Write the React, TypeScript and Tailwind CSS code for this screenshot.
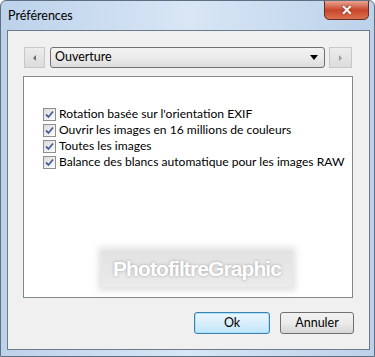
import React from "react";

const font = { fontFamily: 'Lato, "Liberation Sans", sans-serif' };

function Check({ label }: { label: string }) {
  return (
    <div className="flex items-center h-[16px] whitespace-nowrap">
      <div className="w-[13px] h-[13px] shrink-0 border border-[#8e8f8f] bg-gradient-to-br from-[#dcdcdc] to-[#fbfbfb] flex items-center justify-center">
        <svg width="9" height="9" viewBox="0 0 9 9">
          <path d="M1 4.5 L3.5 7 L8 1.5" fill="none" stroke="#4a5f97" strokeWidth="1.8" />
        </svg>
      </div>
      <span className="ml-[3px] text-[12.1px] text-black leading-none">{label}</span>
    </div>
  );
}

export default function App() {
  return (
    <div
      className="w-[375px] h-[357px] flex flex-col bg-gradient-to-r from-[#bcd2ea] via-[#d8e6f5] to-[#bcd2ea] border border-[#5f6f82] rounded-t-[6px] overflow-hidden"
      style={font}
    >
      {/* Title bar */}
      <div className="h-[29px] flex items-start relative">
        <span className="ml-[7px] mt-[6px] text-[12.5px] text-black">Préférences</span>
        <div className="ml-auto mr-[5px] w-[45px] h-[20px] -mt-[1px] rounded-b-[5px] border border-[#6b2b20] bg-gradient-to-b from-[#e8a493] via-[#c8452a] to-[#d8704f] flex items-center justify-center">
          <span className="text-white text-[14px] font-bold leading-none" style={{ textShadow: "0 0 2px #5a1a10" }}>
            ✕
          </span>
        </div>
      </div>
      {/* Client area */}
      <div className="ml-[6px] mr-[4px] h-[320px] border border-[#6c7a8c] bg-[#f0f0f0] flex flex-col">
        <div className="mt-[16px] ml-[16px] flex items-center h-[21px]">
          <div className="w-[21px] h-[21px] border border-[#c8c8c8] bg-gradient-to-b from-[#ececec] to-[#dcdcdc] flex items-center justify-center">
            <svg width="4" height="6" viewBox="0 0 4 6">
              <path d="M3 0 L0 3 L3 6 Z" fill="#6d6d6d" />
            </svg>
          </div>
          <div className="ml-[5px] w-[275px] h-[21px] rounded-[3px] border border-[#707070] bg-gradient-to-b from-[#f3f3f3] via-[#ebebeb] to-[#dddddd] flex items-center">
            <span className="ml-[4px] text-[12.5px] text-black">Ouverture</span>
            <svg className="ml-auto mr-[6px]" width="8" height="5" viewBox="0 0 8 5">
              <path d="M0 0 L8 0 L4 5 Z" fill="#000" />
            </svg>
          </div>
          <div className="ml-[4px] w-[23px] h-[21px] border border-[#c8c8c8] bg-gradient-to-b from-[#ececec] to-[#dcdcdc] flex items-center justify-center">
            <svg width="4" height="6" viewBox="0 0 4 6">
              <path d="M0 0 L3 3 L0 6 Z" fill="#9a9a9a" />
            </svg>
          </div>
        </div>
        <div className="mt-[8px] ml-[15px] w-[330px] h-[222px] border border-[#828790] bg-white flex flex-col">
          <div className="mt-[29px] ml-[19px] flex flex-col">
            <Check label="Rotation basée sur l'orientation EXIF" />
            <Check label="Ouvrir les images en 16 millions de couleurs" />
            <Check label="Toutes les images" />
            <Check label="Balance des blancs automatique pour les images RAW" />
          </div>
          <div className="mt-auto mb-[10px] ml-[78px] w-[190px] h-[36px] bg-gradient-to-b from-[#e2e2e2] to-[#ebebeb] shadow-[0_0_6px_4px_rgba(225,225,225,0.9)] flex items-center justify-center">
            <span
              className="text-white text-[21px] font-bold tracking-[-0.9px]"
              style={{ fontFamily: '"Liberation Sans", Arial, sans-serif', textShadow: "0 0 3px rgba(140,140,140,0.8)" }}
            >
              PhotofiltreGraphic
            </span>
          </div>
        </div>
        <div className="mt-[14px] flex justify-end pr-[15px] gap-[10px]">
          <div className="w-[76px] h-[22px] rounded-[3px] border border-[#3c7fb1] bg-gradient-to-b from-[#eaf6fd] via-[#d9eefa] to-[#bee6fd] shadow-[inset_0_0_0_1px_#a7e3fb] flex items-center justify-center">
            <span className="text-[12.5px] text-black">Ok</span>
          </div>
          <div className="w-[74px] h-[22px] rounded-[3px] border border-[#707070] bg-gradient-to-b from-[#f2f2f2] via-[#ebebeb] to-[#d6d6d6] flex items-center justify-center">
            <span className="text-[12.5px] text-black">Annuler</span>
          </div>
        </div>
      </div>
    </div>
  );
}
